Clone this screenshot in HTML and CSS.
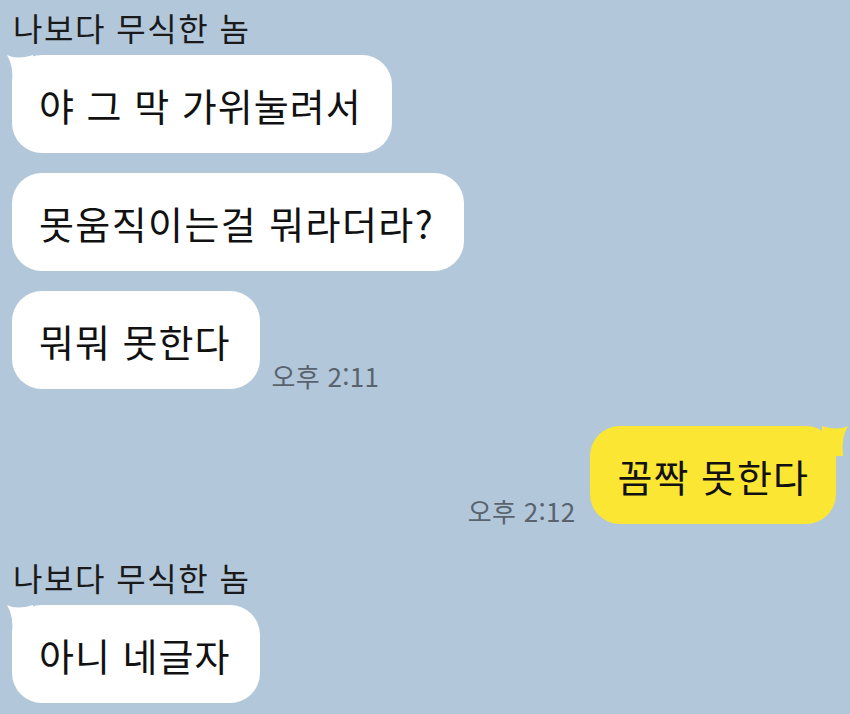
FILE: index.html
```html
<!DOCTYPE html>
<html lang="ko">
<head>
<meta charset="utf-8">
<link rel="stylesheet" href="styles.css">
</head>
<body>
<div class="chat">
  <div class="name">나보다 무식한 놈</div>
  <div class="row">
    <div class="bubble first">
      <svg class="tail" viewBox="0 0 26 30" width="26" height="30"><path d="M0 0 Q10 5 26 0 L26 30 L5 30 Q7 11 0 0 Z"/></svg>
      <span>야 그 막 가위눌려서</span>
    </div>
  </div>
  <div class="row gap">
    <div class="bubble wide"><span>못움직이는걸 뭐라더라?</span></div>
  </div>
  <div class="row gap">
    <div class="bubble"><span>뭐뭐 못한다</span></div>
    <div class="time">오후 2:11</div>
  </div>
  <div class="row mine">
    <div class="time">오후 2:12</div>
    <div class="bubble yellow">
      <svg class="tail tail-r" viewBox="0 0 26 30" width="26" height="30"><path d="M26 0 Q16 5 0 0 L0 30 L21 30 Q19 11 26 0 Z"/></svg>
      <span>꼼짝 못한다</span>
    </div>
  </div>
  <div class="name name2">나보다 무식한 놈</div>
  <div class="row">
    <div class="bubble first">
      <svg class="tail" viewBox="0 0 26 30" width="26" height="30"><path d="M0 0 Q10 5 26 0 L26 30 L5 30 Q7 11 0 0 Z"/></svg>
      <span>아니 네글자</span>
    </div>
  </div>
</div>
</body>
</html>
```

FILE: styles.css
```css
html, body {
  margin: 0;
  padding: 0;
}
body {
  background: #b2c7da;
  width: 850px;
  height: 714px;
  overflow: hidden;
  font-family: "Noto Sans CJK KR", "Noto Sans", sans-serif;
  color: #111111;
}
.chat {
  display: flex;
  flex-direction: column;
  padding: 7px 8px 0 12px;
}
.name {
  font-size: 32px;
  line-height: 40px;
  padding-left: 1px;
  color: #1a1a1a;
  letter-spacing: 1.5px;
}
.name2 {
  margin-top: 33px;
}
.row {
  display: flex;
  align-items: flex-end;
  margin-top: 8px;
}
.row.gap {
  margin-top: 20px;
}
.row.mine {
  justify-content: flex-end;
  margin-top: 37px;
  margin-right: 6px;
}
.bubble {
  position: relative;
  display: flex;
  align-items: center;
  height: 98px;
  box-sizing: border-box;
  padding: 0 30px 0 27px;
  background: #ffffff;
  border-radius: 30px;
  font-size: 38px;
  letter-spacing: 1px;
}
.bubble.wide {
  letter-spacing: 1.4px;
}
.bubble span {
  position: relative;
}
.yellow {
  background: #fbe633;
  padding: 0 27px 0 28px;
}
.tail {
  position: absolute;
  left: -5px;
  top: 0;
  fill: #ffffff;
}
.tail-r {
  left: auto;
  right: -12px;
  fill: #fbe633;
}
.time {
  font-size: 26px;
  line-height: 26px;
  color: #59636e;
  margin: 0 11px 0 11px;
  letter-spacing: 0.3px;
  font-family: "Noto Sans CJK KR", "Roboto", sans-serif;
}
.mine .time {
  margin-right: 14px;
}
```
